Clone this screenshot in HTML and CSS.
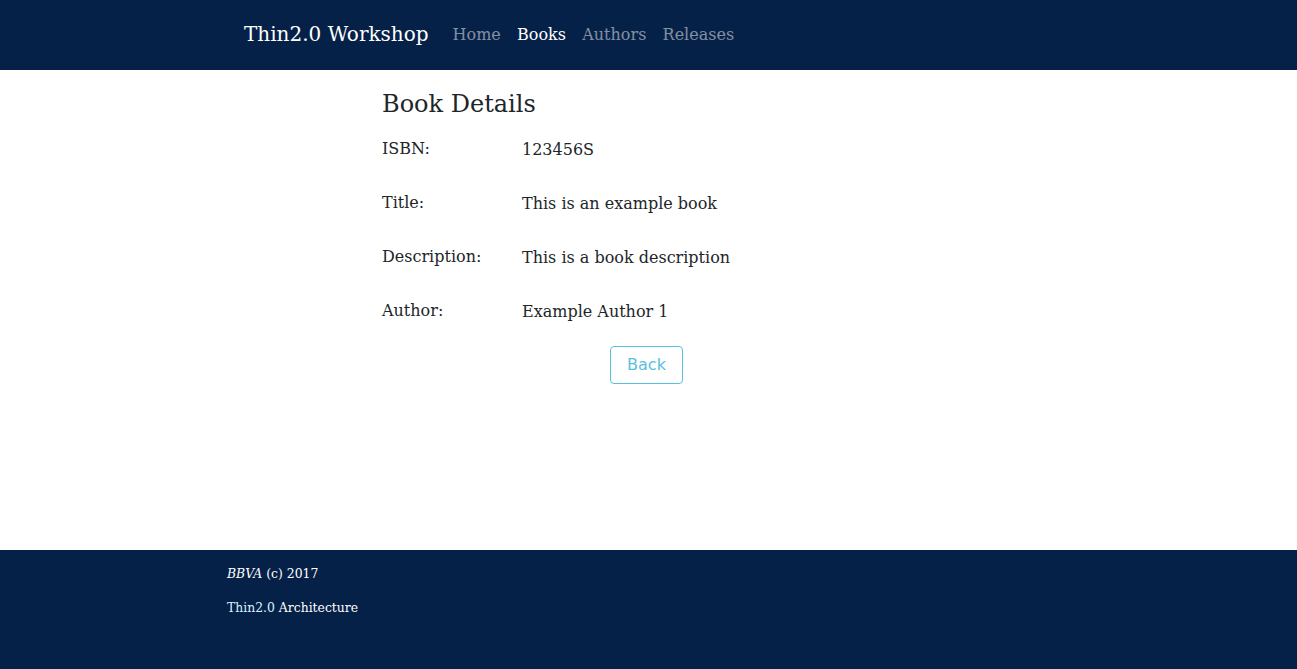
FILE: index.html
```html
<!DOCTYPE html>
<html lang="en">
<head>
<meta charset="utf-8">
<title>Thin2.0 Workshop</title>
<link rel="stylesheet" href="styles.css">
</head>
<body>
<header class="topbar">
  <nav class="topbar-inner">
    <a class="brand" href="#">Thin2.0 Workshop</a>
    <ul class="nav">
      <li><a class="nav-link" href="#">Home</a></li>
      <li><a class="nav-link active" href="#">Books</a></li>
      <li><a class="nav-link" href="#">Authors</a></li>
      <li><a class="nav-link" href="#">Releases</a></li>
    </ul>
  </nav>
</header>
<main class="content">
  <h2 class="page-title">Book Details</h2>
  <dl class="details">
    <dt>ISBN:</dt><dd>123456S</dd>
    <dt>Title:</dt><dd>This is an example book</dd>
    <dt>Description:</dt><dd>This is a book description</dd>
    <dt>Author:</dt><dd>Example Author 1</dd>
  </dl>
  <div class="actions">
    <button class="btn-back" type="button">Back</button>
  </div>
</main>
<footer class="footer">
  <div class="footer-inner">
    <p><em>BBVA</em> (c) 2017</p>
    <p><span class="footer-accent">Thin2.0</span> Architecture</p>
  </div>
</footer>
</body>
</html>
```
FILE: styles.css
```css
* { box-sizing: border-box; }
html, body { height: 100%; }
body {
  margin: 0;
  font-family: "DejaVu Serif", serif;
  color: #212529;
  background: #fff;
  display: flex;
  flex-direction: column;
  min-height: 669px;
}
.topbar {
  background: #062147;
  height: 70px;
  flex: none;
}
.topbar-inner {
  width: 809px;
  margin: 0 auto;
  height: 100%;
  display: flex;
  align-items: center;
}
.brand {
  font-size: 20px;
  color: #fff;
  text-decoration: none;
  margin-right: 24px;
  margin-bottom: 2px;
  line-height: 1;
}
.nav {
  list-style: none;
  margin: 0;
  padding: 0;
  display: flex;
  gap: 16.25px;
}
.nav-link {
  font-size: 16px;
  color: rgba(255,255,255,0.5);
  text-decoration: none;
  line-height: 24px;
  display: block;
}
.nav-link.active { color: #fff; }

.content {
  flex: 1;
  width: 529px;
  margin-left: calc(50% - 266.5px);
  padding-top: 20px;
}
.page-title {
  font-size: 24px;
  font-weight: normal;
  line-height: 1.2;
  margin: 0 0 18px;
}
.details {
  display: grid;
  grid-template-columns: 140px 1fr;
  row-gap: 29px;
  margin: 0;
  font-size: 16px;
  line-height: 24px;
}
.details dt { margin: 0; }
.details dd { margin: 0; padding-top: 1px; }
.actions {
  display: flex;
  justify-content: center;
  margin-top: 22px;
}
.btn-back {
  font-family: "DejaVu Sans", sans-serif;
  font-size: 16px;
  line-height: 24px;
  color: #5bc0de;
  background: transparent;
  border: 1px solid #5bc0de;
  border-radius: 4px;
  padding: 6px 16px;
  height: 38px;
  width: 73px;
}
.footer {
  background: #062147;
  height: 119px;
  flex: none;
  color: #fff;
}
.footer-inner {
  width: 843px;
  margin: 0 auto;
  padding-top: 16px;
  font-size: 12.4px;
  line-height: 16px;
}
.footer-inner p { margin: 0 0 18px; }
.footer-accent { color: #d6f1ff; }
```
